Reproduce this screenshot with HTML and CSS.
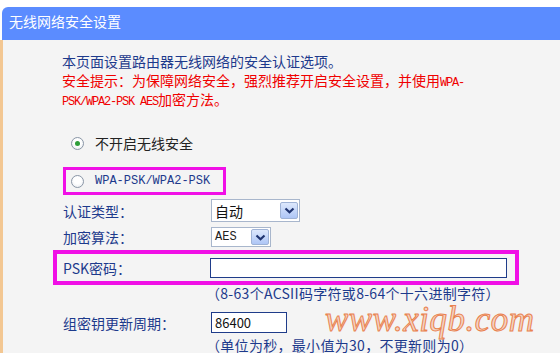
FILE: index.html
```html
<!DOCTYPE html>
<html>
<head>
<meta charset="utf-8">
<link rel="stylesheet" href="styles.css">
</head>
<body>
<div class="panel">
  <div class="header">无线网络安全设置</div>
  <div class="content">
    <div class="intro">
      <div class="line navy">本页面设置路由器无线网络的安全认证选项。</div>
      <div class="line red">安全提示：为保障网络安全，强烈推荐开启安全设置，并使用<span class="mono narrow">WPA-</span></div>
      <div class="line red"><span class="mono narrow">PSK/WPA2-PSK AES</span>加密方法。</div>
    </div>

    <div class="radio-row first">
      <span class="radio checked"></span>
      <span class="opt dark">不开启无线安全</span>
    </div>

    <div class="hl hl-radio">
      <span class="radio"></span>
      <span class="opt mono navy">WPA-PSK/WPA2-PSK</span>
    </div>

    <div class="row r-auth">
      <span class="label">认证类型：</span>
      <span class="select s-auth"><span class="sel-text">自动</span><span class="arrow"><svg width="11" height="7" viewBox="0 0 11 7"><path d="M1.5 1.5 L5.5 5.2 L9.5 1.5" fill="none" stroke="#1f3470" stroke-width="2.2"/></svg></span></span>
    </div>

    <div class="row r-enc">
      <span class="label">加密算法：</span>
      <span class="select s-enc"><span class="sel-text mono">AES</span><span class="arrow"><svg width="11" height="7" viewBox="0 0 11 7"><path d="M1.5 1.5 L5.5 5.2 L9.5 1.5" fill="none" stroke="#1f3470" stroke-width="2.2"/></svg></span></span>
    </div>

    <div class="hl hl-psk">
      <span class="label">PSK密码：</span>
      <span class="input psk"></span>
    </div>

    <div class="hint h1">（8-63个ACSII码字符或8-64个十六进制字符）</div>

    <div class="row r-group">
      <span class="label">组密钥更新周期：</span>
      <span class="input grp">86400</span>
    </div>

    <div class="hint h2">（单位为秒，最小值为30，不更新则为0）</div>

    <div class="watermark">www.xiqb.com</div>
  </div>
</div>
</body>
</html>
```

FILE: styles.css
```css
html, body {
  margin: 0;
  padding: 0;
  background: #ffffff;
  overflow: hidden;
}
body {
  font-family: "Noto Sans CJK SC", "Noto Sans", sans-serif;
  font-size: 14px;
  width: 560px;
  height: 353px;
}
.panel {
  margin-top: 7px;
  margin-left: 2px;
}
.header {
  height: 33px;
  background: #5b8cff;
  border-top-left-radius: 6px;
  color: #ffffff;
  font-size: 14px;
  line-height: 29px;
  padding-left: 7px;
  box-sizing: border-box;
}
.content {
  position: relative;
  margin-left: -2px;
  height: 313px;
  background: #f4f4f4;
  border-left: 3px solid #f3c792;
  box-sizing: border-box;
  overflow: hidden;
}
.navy { color: #1d3a8c; }
.dark { color: #222222; }
.red { color: #f00000; }
.mono {
  font-family: "Liberation Mono", "DejaVu Sans Mono", monospace;
  font-size: 12px;
}
.narrow {
  font-size: 12px;
  letter-spacing: -1.2px;
  line-height: 1;
}
.intro {
  padding-top: 12px;
  margin-left: 59px;
  font-size: 14px;
  white-space: nowrap;
}
.line {
  height: 19px;
  line-height: 19px;
  overflow: visible;
}
.radio-row, .hl-radio {
  display: flex;
  align-items: center;
  margin-left: 60px;
}
.radio-row.first {
  margin-top: 24px;
  height: 20px;
  padding-left: 8px;
}
.radio {
  width: 11px;
  height: 11px;
  border: 1px solid #8a96a6;
  border-radius: 50%;
  background: radial-gradient(circle at 50% 40%, #ffffff 40%, #e3e7ec 100%);
  position: relative;
  flex: none;
}
.radio.checked::after {
  content: "";
  position: absolute;
  left: 3px;
  top: 3px;
  width: 5px;
  height: 5px;
  border-radius: 50%;
  background: #2f9e3a;
}
.opt {
  margin-left: 11px;
  font-size: 14px;
}
.opt.mono { font-size: 12px; }
.hl {
  border: 3px solid #f010e6;
  box-sizing: border-box;
}
.hl-radio {
  margin-top: 14px;
  width: 163px;
  height: 28px;
  padding-left: 5px;
}
.row {
  display: flex;
  align-items: center;
  margin-left: 60px;
}
.label {
  width: 147px;
  flex: none;
  color: #1d3a8c;
  font-size: 14px;
}
.r-auth {
  margin-top: 4px;
  height: 23px;
}
.r-enc {
  margin-top: 5px;
  height: 20px;
}
.select {
  display: flex;
  align-items: center;
  justify-content: space-between;
  background: #ffffff;
  border: 1px solid #a8b6cc;
  box-sizing: border-box;
  margin-left: 1px;
  padding: 0 1px 0 3px;
}
.s-auth { width: 89px; height: 23px; }
.s-enc { width: 60px; height: 20px; }
.sel-text { color: #111; font-size: 14px; }
.sel-text.mono { font-size: 12px; color: #222; }
.arrow {
  display: flex;
  align-items: center;
  justify-content: center;
  width: 18px;
  height: 17px;
  box-sizing: border-box;
  border: 1px solid #9fb3d6;
  background: linear-gradient(#dde8fc, #aec6f6);
  border-radius: 2px;
}
.s-enc .arrow { height: 16px; }
.hl-psk {
  display: flex;
  align-items: center;
  margin-left: 50px;
  margin-top: 3px;
  width: 466px;
  height: 35px;
  border-width: 4px;
  padding-left: 6px;
}
.input {
  display: block;
  background: #ffffff;
  border: 1px solid #1f3c8a;
  box-sizing: border-box;
  color: #111;
  font-size: 13px;
  line-height: 19px;
  padding-left: 3px;
}
.psk { width: 297px; height: 20px; margin-left: 0; }
.grp { width: 76px; height: 21px; margin-left: 1px; }
.hint {
  color: #1d3a8c;
  font-size: 14px;
  line-height: 17px;
  height: 17px;
  margin-left: 203px;
  white-space: nowrap;
  letter-spacing: 0.3px;
}
.h1 { margin-top: 0; }
.r-group {
  margin-top: 10px;
  height: 21px;
}
.h2 { margin-top: 4px; }
.watermark {
  position: absolute;
  left: 322px;
  top: 262px;
  font-family: "Liberation Serif", serif;
  font-style: italic;
  font-size: 35px;
  line-height: 1;
  color: rgba(246, 170, 130, 0.45);
  -webkit-text-stroke: 1px #e9824f;
  letter-spacing: 0.5px;
  white-space: nowrap;
}
```
